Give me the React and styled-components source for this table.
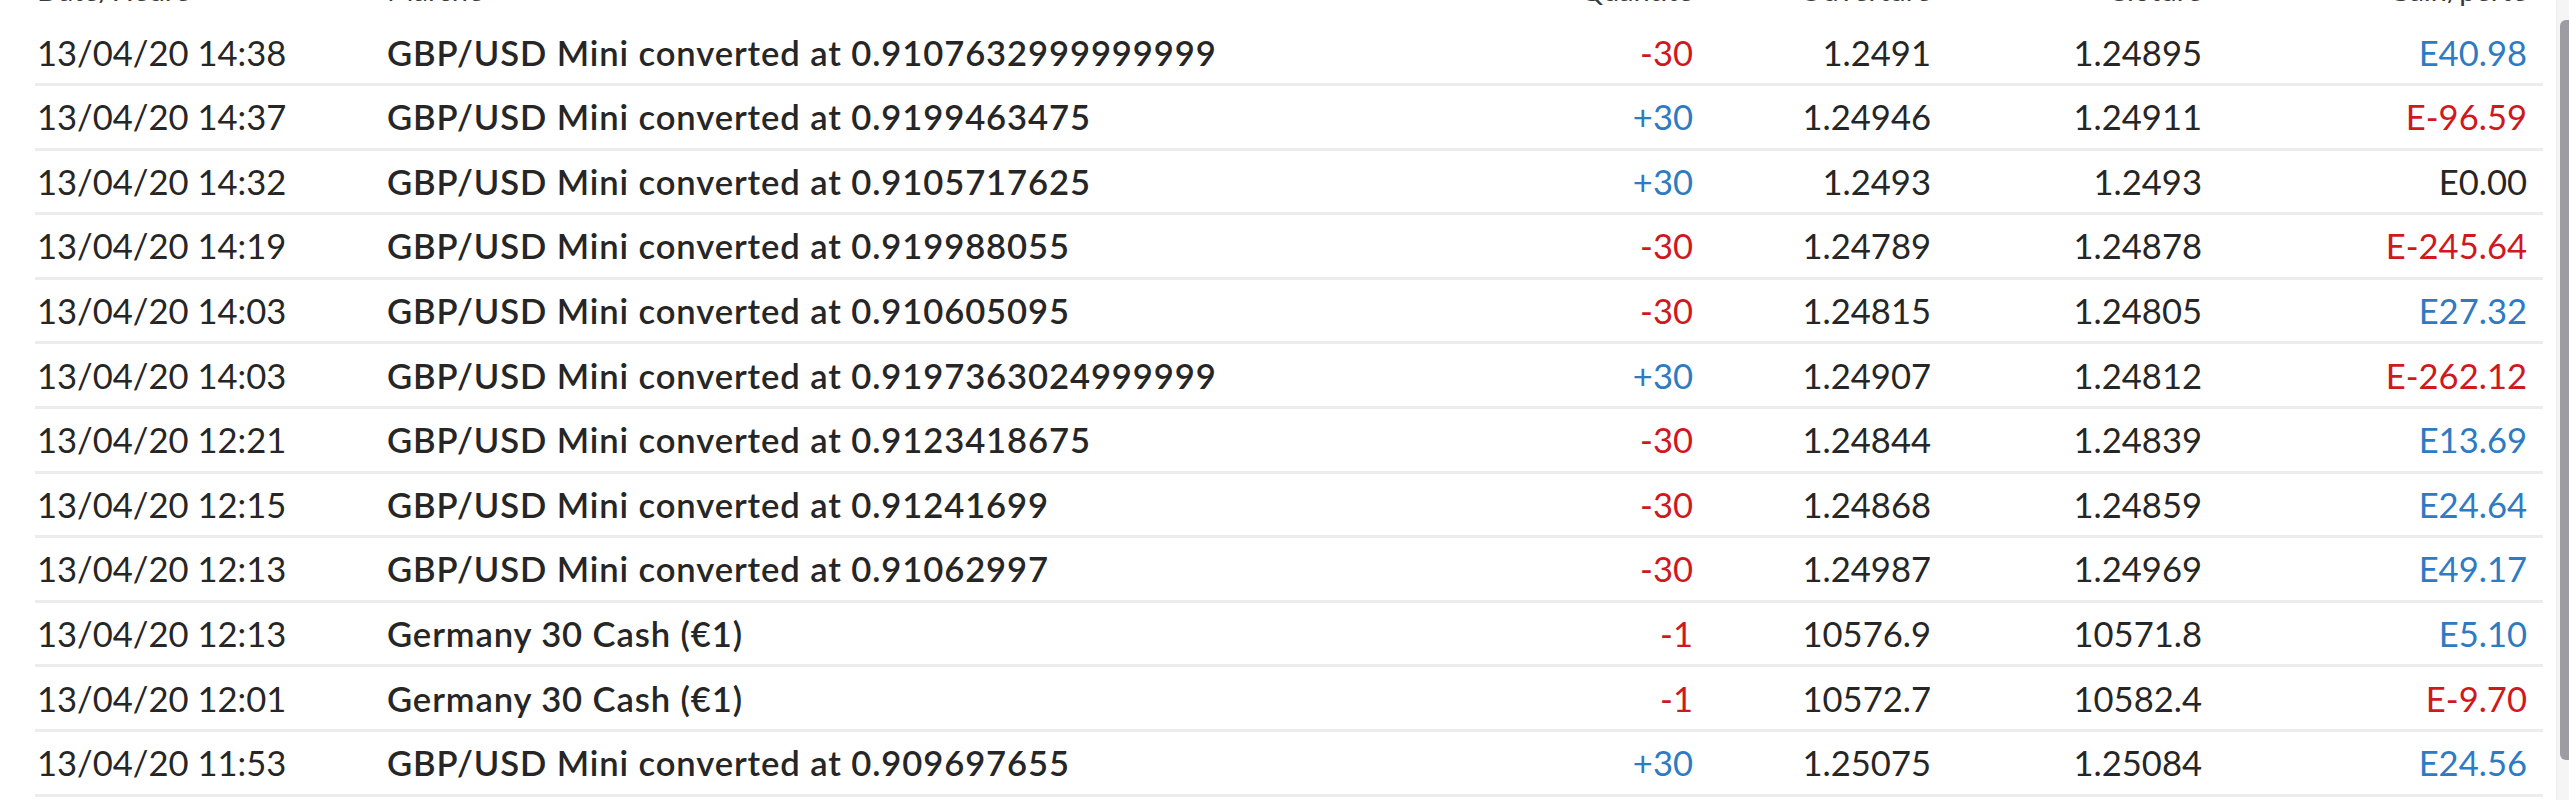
import React, { useLayoutEffect, useRef } from 'react';
import styled, { createGlobalStyle } from 'styled-components';

const GlobalStyle = createGlobalStyle`
  html, body {
    margin: 0;
    padding: 0;
    background: #ffffff;
  }
  body {
    font-family: Lato, "Open Sans", sans-serif;
    color: #262626;
  }
`;

const Page = styled.div`
  display: flex;
  height: 100vh;
  background: #ffffff;
`;

const Viewport = styled.div`
  flex: 1;
  overflow: hidden;
`;

const ScrollTrack = styled.div`
  width: 13px;
  flex-shrink: 0;
  background: #f5f5f6;
  border-left: 1px solid #ededee;
  box-sizing: border-box;
`;

const Thumb = styled.div`
  margin: 20px 0 0 3px;
  height: 740px;
  background: #9c9ca2;
  border-radius: 6px 0 0 6px;
`;

const Table = styled.div`
  padding: 0 13px 47px 35px;
`;

const Row = styled.div`
  display: grid;
  grid-template-columns: 350px 1fr 200px 238px 271px 325px;
  align-items: center;
  box-sizing: border-box;
  height: ${(p) => (p.$head ? '43.4px' : '64.6px')};
  border-bottom: ${(p) => (p.$head ? 'none' : '3px solid #ececec')};
`;

const Cell = styled.div`
  padding: ${(p) => (p.$right ? '1px 16px 0 0' : '1px 0 0 2px')};
  text-align: ${(p) => (p.$right ? 'right' : 'left')};
  font-size: 34.6px;
  line-height: 42px;
  font-weight: ${(p) => (p.$strong ? 600 : 400)};
  letter-spacing: ${(p) => (p.$strong ? '0.9px' : '0')};
  color: ${(p) =>
    p.$tone === 'neg' ? '#d0181f' : p.$tone === 'pos' ? '#2e7bc3' : '#262626'};
  white-space: nowrap;
`;

const HeadCell = styled.div`
  align-self: start;
  padding: ${(p) => (p.$right ? '0 16px 0 0' : '0 0 0 2px')};
  text-align: ${(p) => (p.$right ? 'right' : 'left')};
  font-size: 29px;
  line-height: 23px;
  color: #3a3a3a;
  white-space: nowrap;
`;

const trades = [
  ['13/04/20 14:38', 'GBP/USD Mini converted at 0.9107632999999999', '-30', '1.2491', '1.24895', 'E40.98'],
  ['13/04/20 14:37', 'GBP/USD Mini converted at 0.9199463475', '+30', '1.24946', '1.24911', 'E-96.59'],
  ['13/04/20 14:32', 'GBP/USD Mini converted at 0.9105717625', '+30', '1.2493', '1.2493', 'E0.00'],
  ['13/04/20 14:19', 'GBP/USD Mini converted at 0.919988055', '-30', '1.24789', '1.24878', 'E-245.64'],
  ['13/04/20 14:03', 'GBP/USD Mini converted at 0.910605095', '-30', '1.24815', '1.24805', 'E27.32'],
  ['13/04/20 14:03', 'GBP/USD Mini converted at 0.9197363024999999', '+30', '1.24907', '1.24812', 'E-262.12'],
  ['13/04/20 12:21', 'GBP/USD Mini converted at 0.9123418675', '-30', '1.24844', '1.24839', 'E13.69'],
  ['13/04/20 12:15', 'GBP/USD Mini converted at 0.91241699', '-30', '1.24868', '1.24859', 'E24.64'],
  ['13/04/20 12:13', 'GBP/USD Mini converted at 0.91062997', '-30', '1.24987', '1.24969', 'E49.17'],
  ['13/04/20 12:13', 'Germany 30 Cash (€1)', '-1', '10576.9', '10571.8', 'E5.10'],
  ['13/04/20 12:01', 'Germany 30 Cash (€1)', '-1', '10572.7', '10582.4', 'E-9.70'],
  ['13/04/20 11:53', 'GBP/USD Mini converted at 0.909697655', '+30', '1.25075', '1.25084', 'E24.56'],
];

const sizeTone = (v) => (v.startsWith('-') ? 'neg' : 'pos');

const pnlTone = (v) => {
  const n = parseFloat(v.slice(1));
  if (n < 0) return 'neg';
  if (n > 0) return 'pos';
  return undefined;
};

export default function App() {
  const viewport = useRef(null);

  useLayoutEffect(() => {
    if (viewport.current) viewport.current.scrollTop = 22;
  }, []);

  return (
    <>
      <GlobalStyle />
      <Page>
        <Viewport ref={viewport}>
          <Table>
            <Row $head>
              <HeadCell>Date/Heure</HeadCell>
              <HeadCell>Marché</HeadCell>
              <HeadCell $right>Quantité</HeadCell>
              <HeadCell $right>Ouverture</HeadCell>
              <HeadCell $right>Clôture</HeadCell>
              <HeadCell $right>Gain/perte</HeadCell>
            </Row>
            {trades.map(([date, market, size, open, close, pnl], i) => (
              <Row key={i}>
                <Cell>{date}</Cell>
                <Cell $strong>{market}</Cell>
                <Cell $right $tone={sizeTone(size)}>{size}</Cell>
                <Cell $right>{open}</Cell>
                <Cell $right>{close}</Cell>
                <Cell $right $tone={pnlTone(pnl)}>{pnl}</Cell>
              </Row>
            ))}
          </Table>
        </Viewport>
        <ScrollTrack>
          <Thumb />
        </ScrollTrack>
      </Page>
    </>
  );
}
